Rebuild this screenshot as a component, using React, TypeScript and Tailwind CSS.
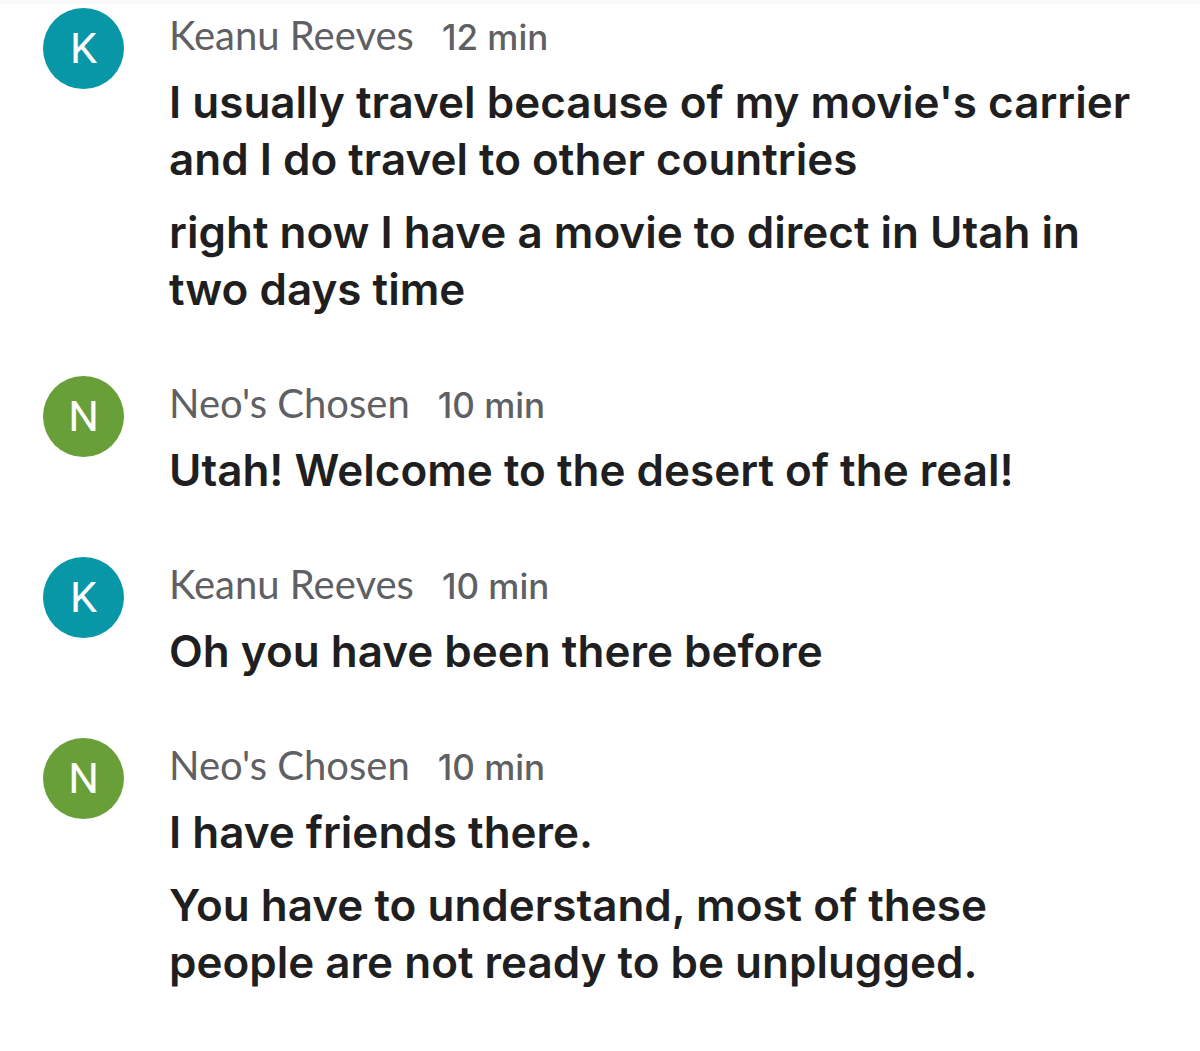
type Message = { name: string; time: string; lines: string[] };

const messages: Message[] = [
  {
    name: "Keanu Reeves",
    time: "12 min",
    lines: [
      "I usually travel because of my movie's carrier and I do travel to other countries",
      "right now I have a movie to direct in Utah in two days time",
    ],
  },
  { name: "Neo's Chosen", time: "10 min", lines: ["Utah! Welcome to the desert of the real!"] },
  { name: "Keanu Reeves", time: "10 min", lines: ["Oh you have been there before"] },
  {
    name: "Neo's Chosen",
    time: "10 min",
    lines: [
      "I have friends there.",
      "You have to understand, most of these people are not ready to be unplugged.",
    ],
  },
];

function Avatar({ name }: { name: string }) {
  const color = name.startsWith("K") ? "bg-[#0797a7]" : "bg-[#689f38]";
  return (
    <div
      className={`flex size-[81px] shrink-0 items-center justify-center rounded-full font-['Roboto',sans-serif] text-[43px] leading-none text-white ${color}`}
    >
      {name[0]}
    </div>
  );
}

function MessageGroup({ name, time, lines }: Message) {
  return (
    <li className="flex items-start gap-[45px]">
      <Avatar name={name} />
      <div className="min-w-0 flex-1">
        <header className="flex h-[66px] items-baseline gap-7 text-[#5f6064]">
          <h2 className="font-['Lato',sans-serif] text-[40px] leading-[54px]">{name}</h2>
          <time className="font-['Inter',sans-serif] text-[35px] leading-[54px] font-medium">{time}</time>
        </header>
        <div className="flex flex-col gap-4 font-['Inter',sans-serif] text-[44px] leading-[57px] font-semibold text-[#1f1f21]">
          {lines.map((line) => (
            <p key={line}>{line}</p>
          ))}
        </div>
      </div>
    </li>
  );
}

export default function App() {
  return (
    <main className="min-h-screen border-t-4 border-[#fafafa] bg-white pt-1 pr-16 pb-10 pl-[43px]">
      <ul className="flex flex-col gap-[58px]">
        {messages.map((message, i) => (
          <MessageGroup key={i} {...message} />
        ))}
      </ul>
    </main>
  );
}
